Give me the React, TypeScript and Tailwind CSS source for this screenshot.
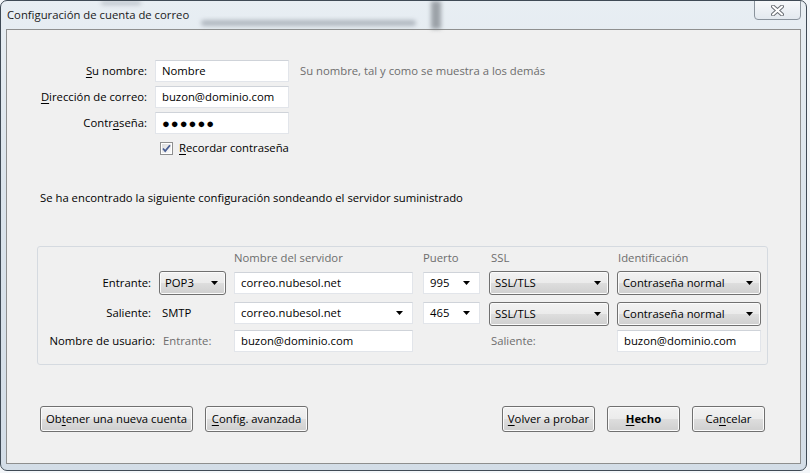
const btnFace =
  "border border-[#707070] rounded-[3px] bg-[linear-gradient(to_bottom,#f2f2f2_0%,#ebebeb_48%,#dddddd_52%,#cfcfcf_100%)] shadow-[inset_0_0_0_1px_#fbfbfb]"

const field = "h-[22px] bg-white border border-[#e2e5ea] border-t-[#cfd3d9] flex items-center px-[6px]"

function Arrow() {
  return (
    <svg width="7" height="4" viewBox="0 0 7 4" className="shrink-0">
      <path d="M0 0h7L3.5 4z" fill="#000" />
    </svg>
  )
}

function Key({ children }: { children: string }) {
  return <span className="underline underline-offset-[2px]">{children}</span>
}

function Field({ value, w, combo = false }: { value: string; w: string; combo?: boolean }) {
  return (
    <div className={`${field} ${w} justify-between`}>
      <span>{value}</span>
      {combo && (
        <span className="pr-[3px]">
          <Arrow />
        </span>
      )}
    </div>
  )
}

function Select({ value, w }: { value: string; w: string }) {
  return (
    <div className={`${btnFace} ${w} h-[24px] flex items-center justify-between pl-[5px] pr-[7px]`}>
      <span>{value}</span>
      <Arrow />
    </div>
  )
}

function Button({ children, w, bold = false }: { children: React.ReactNode; w: string; bold?: boolean }) {
  return (
    <button className={`${btnFace} ${w} h-[26px] flex items-center justify-center whitespace-nowrap ${bold ? 'font-bold' : ''}`}>
      {children}
    </button>
  )
}

function Checkbox() {
  return (
    <div className="w-[13px] h-[13px] border border-[#8e8f8f] bg-white p-[1px]">
      <div className="w-full h-full bg-[linear-gradient(135deg,#dcdcdc,#fbfbfb)] flex items-center justify-center">
        <svg width="9" height="9" viewBox="0 0 9 9">
          <path d="M1 4.5l2.2 2.5L8 1.2" fill="none" stroke="#4a5f94" strokeWidth="1.8" />
        </svg>
      </div>
    </div>
  )
}

export default function App() {
  return (
    <div className="w-[810px] h-[473px] bg-[#f3f6f9] font-['Segoe_UI','Open_Sans',sans-serif] text-[11.3px] leading-none text-black overflow-hidden">
      {/* Window frame */}
      <div className="relative w-[807px] h-[471px] rounded-[7px] border border-[#3f4a55] bg-[linear-gradient(to_bottom,#e8eef3,#dbe4ec_40%,#d3dde7)] flex flex-col overflow-hidden">
        {/* Title bar, with the blurred window behind the glass */}
        <div className="relative h-[28px] shrink-0 flex items-center pl-[6px]">
          <span className="absolute left-[200px] top-[19px] w-[215px] h-[6px] rounded-full bg-[#7d8590] blur-[2px] opacity-50" />
          <span className="absolute left-[100px] top-[0px] w-[40px] h-[4px] rounded-full bg-[#7d8590] blur-[2px] opacity-40" />
          <span className="absolute left-[430px] top-0 w-[10px] h-[28px] bg-[#6b7178] blur-[2px] opacity-60" />
          <span className="relative text-[#1a1a1a]">Configuración de cuenta de correo</span>
          <div className="absolute right-[5px] top-[-1px] w-[47px] h-[20px] rounded-b-[4px] border border-[#8a939c] bg-[linear-gradient(to_bottom,#f6f8fa,#e3e9ef)] flex items-center justify-center">
            <svg width="13" height="11" viewBox="0 0 13 11">
              <path d="M2 1.5l9 8M11 1.5l-9 8" stroke="#6a6f75" strokeWidth="4" strokeLinecap="round" />
              <path d="M2 1.5l9 8M11 1.5l-9 8" stroke="#ffffff" strokeWidth="2" strokeLinecap="round" />
            </svg>
          </div>
        </div>

        {/* Client area */}
        <div className="flex-1 mx-[5px] mb-[6px] border border-[#8e8f8f] bg-[#f0f0f0] flex flex-col">
          {/* Identity */}
          <div className="pt-[30px] grid grid-cols-[140px_134px_1fr] gap-x-[8px] gap-y-[4px] items-center">
            <span className="text-right">
              <Key>S</Key>u nombre:
            </span>
            <Field value="Nombre" w="w-[134px]" />
            <span className="ml-[3px] text-[#6d6d6d]">Su nombre, tal y como se muestra a los demás</span>

            <span className="text-right">
              <Key>D</Key>irección de correo:
            </span>
            <Field value="buzon@dominio.com" w="w-[134px]" />
            <span />

            <span className="text-right">
              Contr<Key>a</Key>seña:
            </span>
            <div className={`${field} w-[134px] text-[13px] tracking-[1px]`}>●●●●●●</div>
            <span />
          </div>

          <div className="mt-[7px] pl-[153px] flex items-center gap-[6px] h-[14px]">
            <Checkbox />
            <span>
              <Key>R</Key>ecordar contraseña
            </span>
          </div>

          <p className="mt-[35px] pl-[33px] h-[16px] flex items-center">
            Se ha encontrado la siguiente configuración sondeando el servidor suministrado
          </p>

          {/* Server settings */}
          <div className="mt-[40px] ml-[30px] w-[731px] h-[119px] rounded-[3px] border border-[#d5dae0] bg-[#f0f0f0] pt-[2px]">
            <div className="grid grid-cols-[121px_75px_189px_66px_128px_144px] grid-rows-[18px_24px_24px_22px] gap-y-[4px] items-center">
              <span />
              <span />
              <span className="text-[#6d6d6d]">Nombre del servidor</span>
              <span className="text-[#6d6d6d]">Puerto</span>
              <span className="text-[#6d6d6d] pl-[2px]">SSL</span>
              <span className="text-[#6d6d6d] pl-[1px]">Identificación</span>

              <span className="text-right pr-[8px]">Entrante:</span>
              <Select value="POP3" w="w-[67px]" />
              <Field value="correo.nubesol.net" w="w-[179px]" />
              <Field value="995" w="w-[57px]" combo />
              <Select value="SSL/TLS" w="w-[120px]" />
              <Select value="Contraseña normal" w="w-[144px]" />

              <span className="text-right pr-[8px] mt-[3px]">Saliente:</span>
              <span className="pl-[3px] mt-[3px]">SMTP</span>
              <div className="mt-[3px]">
                <Field value="correo.nubesol.net" w="w-[179px]" combo />
              </div>
              <div className="mt-[3px]">
                <Field value="465" w="w-[57px]" combo />
              </div>
              <div className="mt-[6px]">
                <Select value="SSL/TLS" w="w-[120px]" />
              </div>
              <div className="mt-[6px]">
                <Select value="Contraseña normal" w="w-[144px]" />
              </div>

              <span className="text-right pr-[4px] mt-[6px] whitespace-nowrap">Nombre de usuario:</span>
              <span className="pl-[4px] text-[#6d6d6d] mt-[6px]">Entrante:</span>
              <div className="mt-[6px]">
                <Field value="buzon@dominio.com" w="w-[179px]" />
              </div>
              <span />
              <span className="pl-[2px] text-[#6d6d6d] mt-[6px]">Saliente:</span>
              <div className="mt-[6px]">
                <Field value="buzon@dominio.com" w="w-[144px]" />
              </div>
            </div>
          </div>

          {/* Buttons */}
          <div className="mt-[41px] pl-[33px] pr-[35px] flex justify-between">
            <div className="flex gap-[12px]">
              <Button w="w-[153px]">
                <span>
                  Ob<Key>t</Key>ener una nueva cuenta
                </span>
              </Button>
              <Button w="w-[103px]">
                <span>
                  <Key>C</Key>onfig. avanzada
                </span>
              </Button>
            </div>
            <div className="flex gap-[12px]">
              <Button w="w-[93px]">
                <span>
                  <Key>V</Key>olver a probar
                </span>
              </Button>
              <Button w="w-[73px]" bold>
                <span>
                  <Key>H</Key>echo
                </span>
              </Button>
              <Button w="w-[73px]">
                <span>
                  Ca<Key>n</Key>celar
                </span>
              </Button>
            </div>
          </div>
        </div>
      </div>
    </div>
  )
}
